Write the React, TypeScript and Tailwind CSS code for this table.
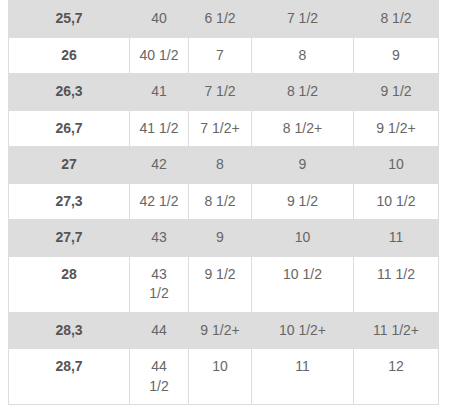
import React from 'react'

type Row = {
  cm: string
  eu: React.ReactNode
  uk: string
  us: string
  usw: string
}

const rows: Row[] = [
  { cm: '25,7', eu: '40', uk: '6 1/2', us: '7 1/2', usw: '8 1/2' },
  { cm: '26', eu: '40 1/2', uk: '7', us: '8', usw: '9' },
  { cm: '26,3', eu: '41', uk: '7 1/2', us: '8 1/2', usw: '9 1/2' },
  { cm: '26,7', eu: '41 1/2', uk: '7 1/2+', us: '8 1/2+', usw: '9 1/2+' },
  { cm: '27', eu: '42', uk: '8', us: '9', usw: '10' },
  { cm: '27,3', eu: '42 1/2', uk: '8 1/2', us: '9 1/2', usw: '10 1/2' },
  { cm: '27,7', eu: '43', uk: '9', us: '10', usw: '11' },
  {
    cm: '28',
    eu: (
      <>
        43
        <br />
        1/2
      </>
    ),
    uk: '9 1/2',
    us: '10 1/2',
    usw: '11 1/2',
  },
  { cm: '28,3', eu: '44', uk: '9 1/2+', us: '10 1/2+', usw: '11 1/2+' },
  {
    cm: '28,7',
    eu: (
      <>
        44
        <br />
        1/2
      </>
    ),
    uk: '10',
    us: '11',
    usw: '12',
  },
]

const cell = 'border border-[#dddddd] px-2 py-2 text-center align-top'

export default function App() {
  return (
    <div className="bg-white min-h-screen pl-2 font-['Liberation_Sans',Arial,sans-serif] text-[14px] leading-[19.5px] text-[#666666]">
      <table className="w-[430px] table-fixed border-collapse">
        <colgroup>
          <col className="w-[121px]" />
          <col className="w-[59px]" />
          <col className="w-[63px]" />
          <col className="w-[102px]" />
          <col className="w-[85px]" />
        </colgroup>
        <tbody>
          {rows.map((r, idx) => (
            <tr key={idx} className={idx % 2 === 0 ? 'bg-[#dddddd]' : 'bg-white'}>
              <td className={`${cell} font-bold text-[#555555]`}>{r.cm}</td>
              <td className={cell}>{r.eu}</td>
              <td className={cell}>{r.uk}</td>
              <td className={cell}>{r.us}</td>
              <td className={cell}>{r.usw}</td>
            </tr>
          ))}
        </tbody>
      </table>
    </div>
  )
}
